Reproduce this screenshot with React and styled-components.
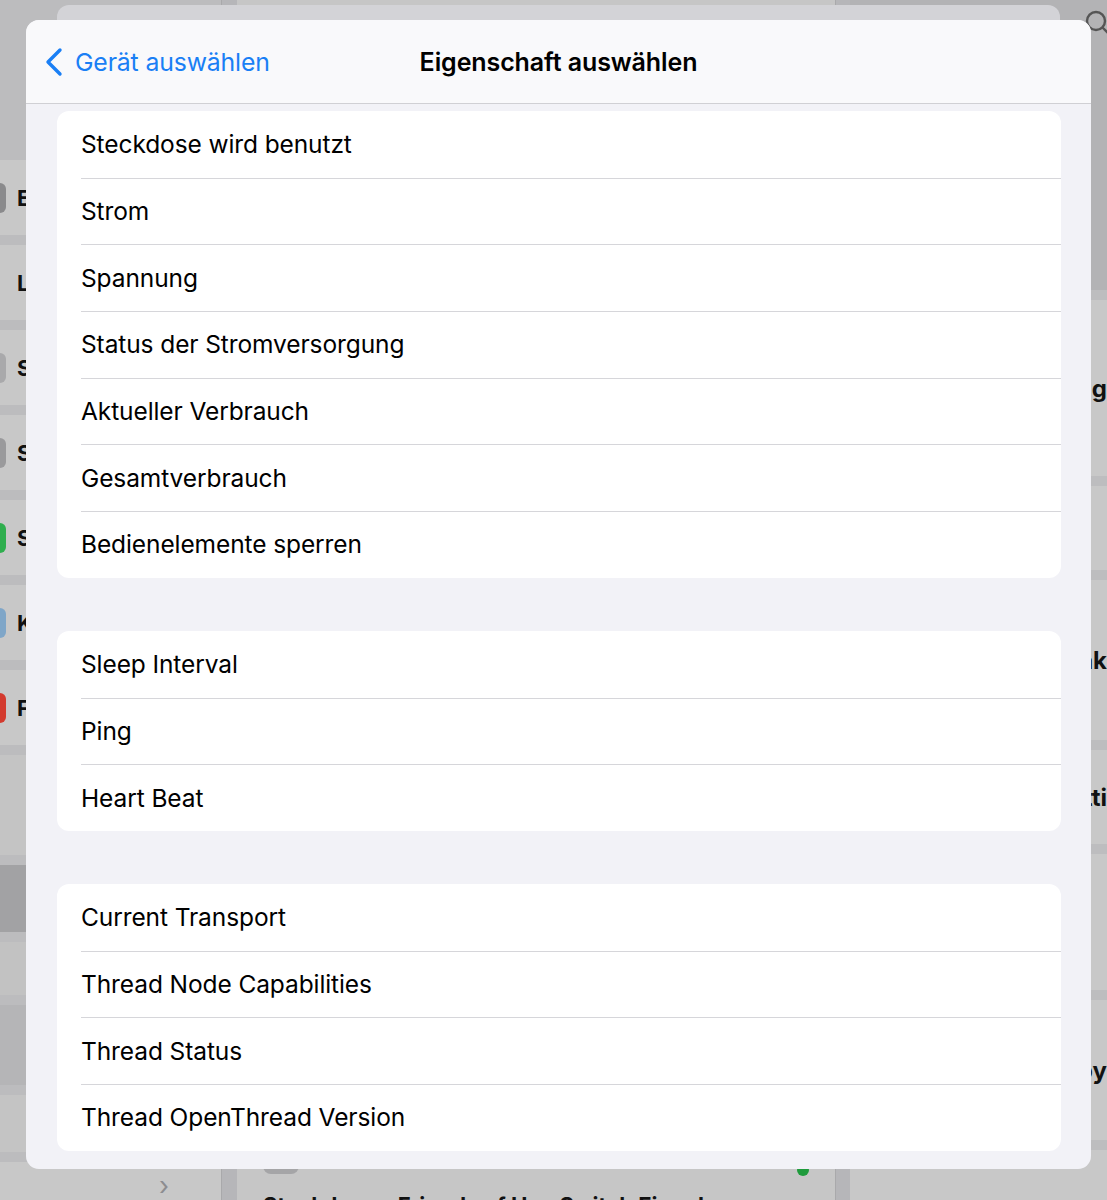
import React from 'react';
import styled, { createGlobalStyle } from 'styled-components';

const GlobalStyle = createGlobalStyle`
  html, body {
    margin: 0;
    padding: 0;
    background: #c4c4c6;
  }
  body {
    font-family: Inter, "Noto Sans", "Liberation Sans", sans-serif;
    -webkit-font-smoothing: antialiased;
  }
`;

const Screen = styled.div`
  position: relative;
  width: 1107px;
  height: 1200px;
  overflow: hidden;
  background: #b4b4b6;
`;

/* dimmed app behind the sheet */
const Backdrop = styled.div`
  display: flex;
  height: 100%;
  overflow: hidden;
  background: #b8b8ba;
`;

const Sidebar = styled.div`
  width: 221px;
  flex-shrink: 0;
  display: flex;
  flex-direction: column;
  gap: 10px;
  padding-top: 160px;
  overflow: hidden;
  background: #bcbcbe;
`;

const SideRow = styled.div`
  height: 75px;
  flex-shrink: 0;
  display: flex;
  align-items: center;
  background: #c8c8c8;
  font-weight: 700;
  font-size: 22px;
  color: #111;
`;

const SideIcon = styled.span`
  width: 6px;
  height: 30px;
  border-radius: 0 6px 6px 0;
  background: ${p => p.$color || 'transparent'};
`;

const SideLabel = styled.span`
  margin-left: 11px;
`;

const SideBlock = styled.div`
  height: ${p => p.$h}px;
  flex-shrink: 0;
  background: ${p => p.$bg};
  display: flex;
  align-items: center;
  justify-content: flex-end;
  padding-right: 52px;
  color: #8d8d90;
  font-size: 26px;
`;

const Divider = styled.div`
  width: 15px;
  flex-shrink: 0;
  background: #b6b6b9;
  border-left: 1px solid #a9a9ab;
`;

const Main = styled.div`
  flex: 1;
  display: grid;
  grid-template-columns: 598px 15px 1fr;
  grid-template-rows: minmax(0, 1fr);
  overflow: hidden;
  background: #c6c6c6;
`;

const MainColumn = styled.div`
  display: flex;
  flex-direction: column;
  justify-content: flex-end;
  gap: 16px;
  padding: 0 26px;
`;

const RightColumn = styled.div`
  display: flex;
  flex-direction: column;
  overflow: hidden;
`;

const RightCard = styled.div`
  height: ${p => p.$h}px;
  flex-shrink: 0;
  box-sizing: border-box;
  background: ${p => p.$bg || '#c8c8c8'};
  border-bottom: 10px solid #bdbdbf;
  display: flex;
  align-items: center;
  justify-content: flex-end;
  font-weight: 700;
  font-size: 24px;
  color: #111;
  white-space: nowrap;
`;

const Pills = styled.div`
  display: flex;
  align-items: flex-start;
  justify-content: space-between;
`;

const Pill = styled.div`
  width: ${p => p.$w || 36}px;
  height: 12px;
  border-radius: 0 0 8px 8px;
  background: #a5a5a7;
`;

const Dot = styled.div`
  width: 12px;
  height: 12px;
  margin-top: 2px;
  border-radius: 50%;
  background: #1f9b3c;
`;

const CardTitle = styled.div`
  font-weight: 700;
  font-size: 22px;
  color: #111;
  white-space: nowrap;
  height: 12px;
  margin-bottom: -4px;
`;

const StackedSheet = styled.div`
  position: absolute;
  left: 57px;
  top: 5px;
  width: 1003px;
  height: 60px;
  border-radius: 12px;
  background: #d3d3d7;
`;

const SearchIcon = styled.div`
  position: absolute;
  right: -8px;
  top: 8px;
`;

/* the sheet itself */
const Sheet = styled.div`
  position: absolute;
  left: 26px;
  top: 20px;
  width: 1065px;
  height: 1149px;
  border-radius: 13px;
  overflow: hidden;
  background: #f2f2f7;
  display: flex;
  flex-direction: column;
`;

const Header = styled.div`
  height: 84px;
  flex-shrink: 0;
  display: grid;
  grid-template-columns: 1fr auto 1fr;
  align-items: center;
  background: #f9f9fb;
  border-bottom: 1.5px solid #d0d0d4;
  box-sizing: border-box;
`;

const BackButton = styled.div`
  display: flex;
  align-items: center;
  gap: 11px;
  padding-left: 18px;
  color: #1a7ff5;
  font-size: 24.8px;
  letter-spacing: -0.15px;
`;

const Title = styled.div`
  font-size: 25px;
  font-weight: 600;
  color: #000;
  letter-spacing: -0.1px;
`;

const Body = styled.div`
  display: flex;
  flex-direction: column;
  gap: 53px;
  padding: 7px 30px 0 31px;
`;

const Group = styled.div`
  background: #fff;
  border-radius: 12px;
  overflow: hidden;
`;

const Row = styled.div`
  height: 66.7px;
  display: flex;
  align-items: center;
  margin-left: 24px;
  box-sizing: border-box;
  border-top: ${p => (p.$first ? 'none' : '1px solid #d6d6da')};
  font-size: 24.5px;
  letter-spacing: -0.1px;
  color: #000;
  padding-bottom: 1px;
`;

const groups = [
  [
    'Steckdose wird benutzt',
    'Strom',
    'Spannung',
    'Status der Stromversorgung',
    'Aktueller Verbrauch',
    'Gesamtverbrauch',
    'Bedienelemente sperren',
  ],
  ['Sleep Interval', 'Ping', 'Heart Beat'],
  [
    'Current Transport',
    'Thread Node Capabilities',
    'Thread Status',
    'Thread OpenThread Version',
  ],
];

const sideRows = [
  { label: 'E', color: '#8a8a8c' },
  { label: 'L' },
  { label: 'S', color: '#a9a9ab' },
  { label: 'S', color: '#9a9a9c' },
  { label: 'S', color: '#2fae4e' },
  { label: 'K', color: '#7fa6c8' },
  { label: 'F', color: '#d33a2e' },
];

const rightCards = [
  { h: 300, bg: '#b3b3b5' },
  { h: 186, text: 'Richtig' },
  { h: 94 },
  { h: 170, text: 'Kodak' },
  { h: 104, text: 'Konfetti' },
  { h: 146 },
  { h: 150, text: 'Lobby' },
  { h: 100 },
];

const App = () => (
  <>
    <GlobalStyle />
    <Screen>
      <Backdrop>
        <Sidebar>
          {sideRows.map((r, i) => (
            <SideRow key={i}>
              <SideIcon $color={r.color} />
              <SideLabel>{r.label}</SideLabel>
            </SideRow>
          ))}
          <SideBlock $h={100} $bg="#c4c4c4" />
          <SideBlock $h={67} $bg="#a2a2a4" />
          <SideBlock $h={53} $bg="#c2c2c2" />
          <SideBlock $h={80} $bg="#b5b5b7" />
          <SideBlock $h={57} $bg="#c4c4c4" />
          <SideBlock $h={46} $bg="#c8c8c8">›</SideBlock>
        </Sidebar>
        <Divider />
        <Main>
          <MainColumn>
            <Pills>
              <Pill $w={36} />
              <Dot />
            </Pills>
            <CardTitle>Steckdose – Friends of Hue Switch Eingabe</CardTitle>
          </MainColumn>
          <Divider />
          <RightColumn>
            {rightCards.map((c, i) => (
              <RightCard key={i} $h={c.h} $bg={c.bg}>{c.text}</RightCard>
            ))}
          </RightColumn>
        </Main>
      </Backdrop>

      <StackedSheet />
      <SearchIcon>
        <svg width="32" height="32" viewBox="0 0 32 32" fill="none" stroke="#555" strokeWidth="2.4" strokeLinecap="round">
          <circle cx="13" cy="13" r="9" />
          <path d="M20 20l8 8" />
        </svg>
      </SearchIcon>

      <Sheet>
        <Header>
          <BackButton>
            <svg width="20" height="30" viewBox="0 0 20 30" fill="none" stroke="#1a7ff5" strokeWidth="3.4" strokeLinecap="round" strokeLinejoin="round">
              <path d="M16 3L4 15l12 12" />
            </svg>
            Gerät auswählen
          </BackButton>
          <Title>Eigenschaft auswählen</Title>
          <div />
        </Header>
        <Body>
          {groups.map((items, gi) => (
            <Group key={gi}>
              {items.map((label, i) => (
                <Row key={label} $first={i === 0}>{label}</Row>
              ))}
            </Group>
          ))}
        </Body>
      </Sheet>
    </Screen>
  </>
);

export default App;
